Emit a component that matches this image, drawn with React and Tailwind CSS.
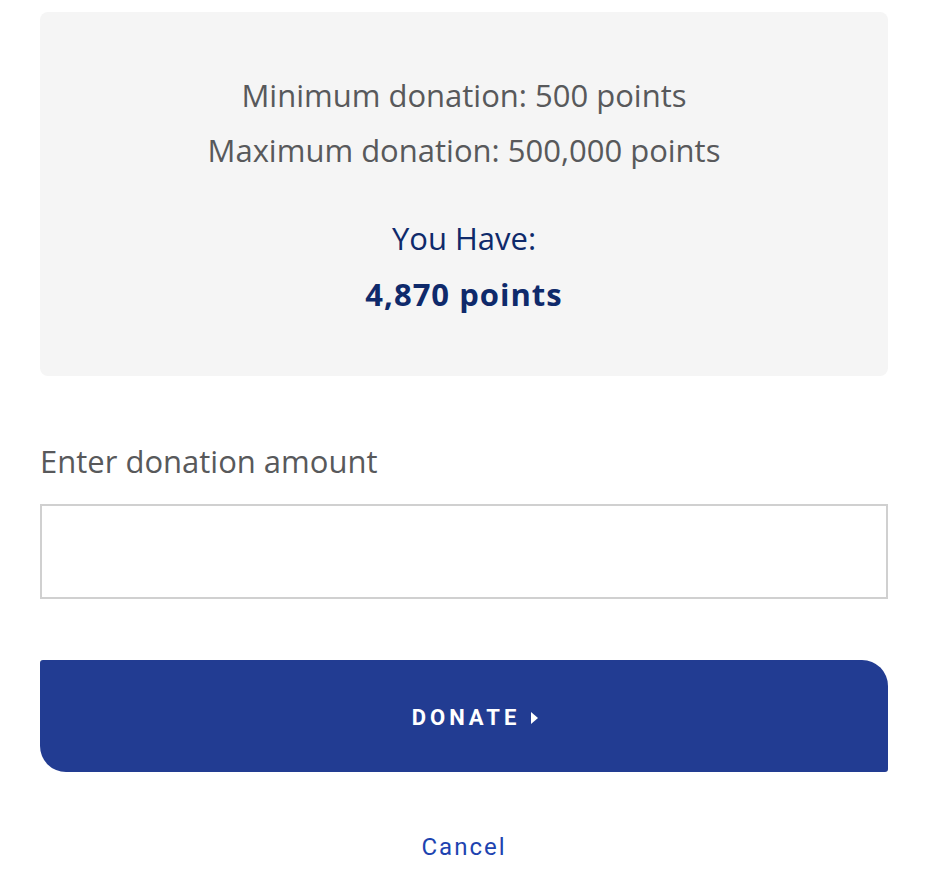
export default function App() {
  return (
    <div className="w-[932px] h-[886px] bg-white overflow-hidden" style={{ fontFamily: '"Open Sans", "Noto Sans", sans-serif' }}>
      <div className="ml-[40px] w-[848px] pt-[12px]">
        <div className="bg-[#f5f5f5] rounded-[8px] h-[364px] flex flex-col items-center pt-[55px]">
          <p className="text-[31px] leading-[56px] text-[#58595b]">Minimum donation: 500 points</p>
          <p className="text-[31px] leading-[56px] text-[#58595b] -mt-[1px]">Maximum donation: 500,000 points</p>
          <p className="text-[31px] leading-[56px] text-[#0f2a6b] mt-[32px]">You Have:</p>
          <p className="text-[31px] leading-[56px] text-[#0f2a6b] font-bold tracking-[1px]">4,870 points</p>
        </div>
        <label className="block mt-[65px] text-[31px] leading-[40px] text-[#58595b]">Enter donation amount</label>
        <input type="text" className="block mt-[23px] w-full h-[95px] border-2 border-[#d0d0d0] bg-white outline-none" />
        <button className="mt-[61px] w-full h-[112px] bg-[#223c92] rounded-tr-[26px] rounded-bl-[26px] rounded-tl-[3px] rounded-br-[3px] flex items-center justify-center">
          <span className="relative mt-[3px] pl-[4px] text-white font-bold text-[22px] tracking-[4px] leading-none" style={{ fontFamily: '"Roboto", sans-serif' }}>
            DONATE
            <svg className="absolute left-full top-1/2 -translate-y-1/2 ml-[11px]" width="7" height="12" viewBox="0 0 7 12"><path d="M0 0 L7 6 L0 12 Z" fill="white" /></svg>
          </span>
        </button>
        <div className="mt-[57px] text-center">
          <span className="text-[#1d43b0] text-[24px] tracking-[2px]" style={{ fontFamily: '"Roboto", sans-serif' }}>Cancel</span>
        </div>
      </div>
    </div>
  );
}
